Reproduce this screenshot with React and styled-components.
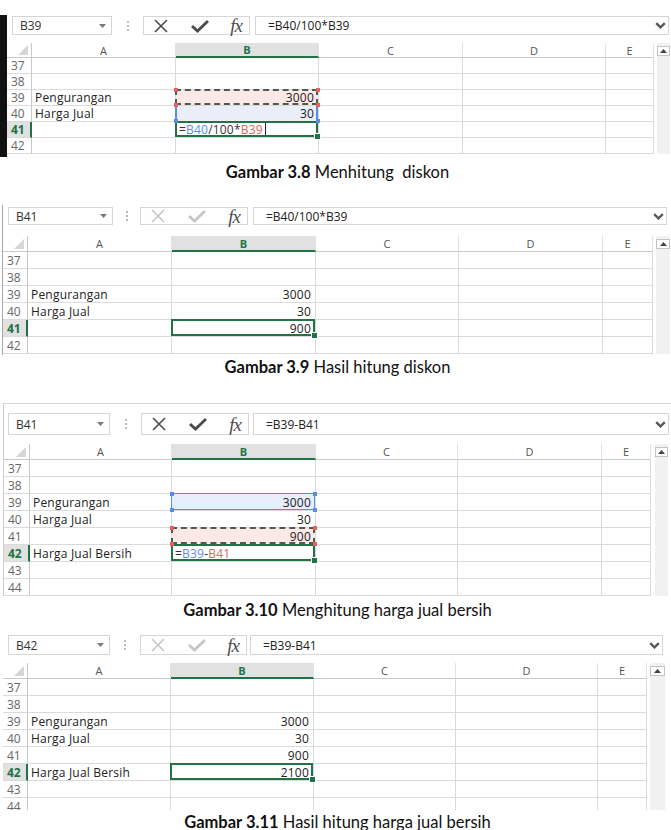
import React from 'react'
import styled, { createGlobalStyle, css } from 'styled-components'

const GREEN = '#217346'
const BLUE = '#5b8de6'
const RED = '#e2625e'
const GRID = '#dadada'
const HEAD = '#c9c9c9'

const GlobalStyle = createGlobalStyle`
  html, body { margin: 0; padding: 0; background: #fff; overflow: hidden; }
  body { font-family: "Open Sans", "Noto Sans", sans-serif; color: #222; }
`

const Page = styled.div`
  width: 671px;
  display: flex;
  flex-direction: column;
`

const Shot = styled.div`
  display: flex;
  flex-direction: column;
  flex-shrink: 0;
  margin: ${p => p.$mt}px 0 0 ${p => p.$ml || 0}px;
  padding: ${p => p.$pt || 0}px 0 ${p => p.$pb || 0}px;
  border-left: ${p => p.$edge || 'none'};
  border-top: ${p => p.$top || 'none'};
  height: ${p => (p.$h ? p.$h + 'px' : 'auto')};
  overflow: hidden;
`

/* ---- formula bar ---- */

const Toolbar = styled.div`
  display: flex;
  align-items: stretch;
  flex-shrink: 0;
  height: ${p => p.$h}px;
  margin: 0 ${p => p.$mr}px ${p => p.$mb}px ${p => p.$ml}px;
`

const NameBox = styled.div`
  width: ${p => p.$w}px;
  box-sizing: border-box;
  border: 1px solid #d6d6d6;
  display: flex;
  align-items: center;
  justify-content: space-between;
  padding: 0 5px 0 7px;
  font-size: 12px;
  color: #333;
`

const Dots = styled.div`
  width: ${p => p.$w}px;
  display: flex;
  flex-direction: column;
  align-items: center;
  justify-content: center;
  gap: 2px;
`

const Dot = styled.span`
  width: 2px;
  height: 2px;
  background: #bdbdbd;
`

const Buttons = styled.div`
  width: ${p => p.$w}px;
  margin-right: ${p => p.$gap}px;
  box-sizing: border-box;
  border: 1px solid #d6d6d6;
  display: flex;
  align-items: center;
  justify-content: space-between;
  padding: 0 7px 0 9px;
  color: ${p => (p.$live ? '#4a4a4a' : '#c6c6c6')};
`

const Fx = styled.span`
  font-family: "Liberation Serif", "DejaVu Serif", serif;
  font-style: italic;
  font-size: 19px;
  line-height: 1;
  color: #4d4d4d;
  letter-spacing: -1px;
`

const FormulaBox = styled.div`
  flex: 1;
  border: 1px solid #d6d6d6;
  display: flex;
  align-items: center;
  justify-content: space-between;
  padding: 0 2px 0 12px;
  font-size: 12px;
  color: #222;
`

/* ---- sheet ---- */

const SheetArea = styled.div`
  display: flex;
  align-items: stretch;
`

const Grid = styled.div`
  display: grid;
  grid-template-columns: ${p => p.$cols.map(c => c + 'px').join(' ')};
  grid-template-rows: ${p => p.$hh}px;
  grid-auto-rows: ${p => p.$rh}px;
`

const Scrollbar = styled.div`
  width: ${p => p.$w}px;
  margin-left: ${p => p.$gap}px;
  background: #f1f1f1;
  padding-top: 3px;
`

const ScrollUp = styled.div`
  height: 10px;
  box-sizing: border-box;
  background: #fff;
  border: 1px solid #c4c4c4;
  display: flex;
  align-items: center;
  justify-content: center;
`

const ColHead = styled.div`
  display: flex;
  align-items: center;
  justify-content: center;
  font-size: 11px;
  color: #555;
  border-right: 1px solid #e2e2e2;
  border-bottom: 1px solid ${HEAD};
  ${p => p.$sel && css`
    background: #e1e1e1;
    color: ${GREEN};
    font-weight: 700;
    border-bottom: 2px solid ${GREEN};
  `}
`

const CornerHead = styled(ColHead)`
  justify-content: flex-end;
  align-items: flex-end;
  padding: 0 3px 2px 0;
  border-right: 1px solid ${HEAD};
`

const RowHead = styled.div`
  display: flex;
  align-items: center;
  padding-left: 4px;
  font-size: 12px;
  color: #666;
  border-right: 1px solid ${HEAD};
  border-bottom: 1px solid ${GRID};
  ${p => p.$sel && css`
    background: #e1e1e1;
    color: ${GREEN};
    font-weight: 700;
    border-right: 2px solid ${GREEN};
  `}
`

const Cell = styled.div`
  position: relative;
  display: flex;
  align-items: center;
  justify-content: ${p => (p.$right ? 'flex-end' : 'flex-start')};
  padding: 0 4px 0 3px;
  border-right: 1px solid ${GRID};
  border-bottom: 1px solid ${GRID};
  background: ${p => p.$bg || '#fff'};
  font-size: 12px;
  letter-spacing: 0.2px;
  white-space: nowrap;
  color: #222;
`

const Frame = styled.span`
  position: absolute;
  top: -1px;
  left: -1px;
  right: 0;
  bottom: 0;
  z-index: 2;
  pointer-events: none;
  ${p => p.$kind === 'active' && css`border: 2px solid ${GREEN};`}
  ${p => p.$kind === 'copy' && css`border: 2px dashed #4f5b4f;`}
  ${p => p.$kind === 'ref' && css`border: 1px solid ${BLUE};`}
  ${p => p.$kind === 'sides' && css`
    border-left: 2px solid ${BLUE};
    border-right: 2px solid ${BLUE};
  `}
`

const Handle = styled.span`
  position: absolute;
  z-index: 3;
  width: ${p => p.$s || 4}px;
  height: ${p => p.$s || 4}px;
  background: ${p => p.$c};
  ${p => (p.$at.includes('t') ? 'top' : 'bottom')}: -2px;
  ${p => (p.$at.includes('l') ? 'left' : 'right')}: -2px;
  ${p => p.$ring && css`outline: 1px solid #fff;`}
`

const Ref = styled.span`
  color: ${p => (p.$c === 'blue' ? BLUE : p.$c === 'red' ? RED : '#333')};
`

const Caret = styled.span`
  width: 1px;
  height: 13px;
  background: #222;
  margin-left: 2px;
`

const Caption = styled.div`
  margin-top: ${p => p.$mt}px;
  padding-left: 4px;
  text-align: center;
  font-family: Lato, "Liberation Sans", sans-serif;
  font-size: 16.5px;
  line-height: 18px;
  color: #111;
  white-space: pre;
  flex-shrink: 0;
`

/* ---- icons ---- */

const Cross = () => (
  <svg width="16" height="14" viewBox="0 0 16 14">
    <path d="M2 1 L14 13 M14 1 L2 13" stroke="currentColor" strokeWidth="1.6" fill="none" />
  </svg>
)

const Tick = () => (
  <svg width="20" height="14" viewBox="0 0 20 14">
    <path d="M2 7 L7.5 12 L18 2" stroke="currentColor" strokeWidth="2.8" fill="none" />
  </svg>
)

const DropTri = () => (
  <svg width="7" height="4" viewBox="0 0 7 4">
    <path d="M0 0 H7 L3.5 4 Z" fill="#7a7a7a" />
  </svg>
)

const Chevron = () => (
  <svg width="11" height="7" viewBox="0 0 11 7">
    <path d="M1.2 1.2 L5.5 5.4 L9.8 1.2" stroke="#5a5a5a" strokeWidth="2.4" fill="none" />
  </svg>
)

const UpTri = () => (
  <svg width="7" height="4" viewBox="0 0 7 4">
    <path d="M0 4 H7 L3.5 0 Z" fill="#444" />
  </svg>
)

const SelectAll = () => (
  <svg width="10" height="10" viewBox="0 0 10 10">
    <path d="M10 0 V10 H0 Z" fill="#d6d6d6" />
  </svg>
)

/* ---- data ---- */

const f1 = [['=', null], ['B40', 'blue'], ['/100*', null], ['B39', 'red']]
const f2 = [['=', null], ['B39', 'blue'], ['-', null], ['B41', 'red']]

const figures = [
  {
    shot: { mt: 15, edge: '7px solid #111', pt: 1, pb: 3 },
    bar: { h: 19, ml: 5, mr: 2, mb: 8, nameW: 100, dotsW: 31, btnW: 107, gap: 5, name: 'B39', live: true, formula: '=B40/100*B39' },
    cols: [25, 144, 143, 144, 143, 48], hh: 15, rh: 16, scroll: { gap: 3, w: 13 },
    active: 41,
    rows: [
      { n: 37 }, { n: 38 },
      { n: 39, a: 'Pengurangan', b: '3000', kind: 'copy' },
      { n: 40, a: 'Harga Jual', b: '30', kind: 'sides' },
      { n: 41, f: f1, kind: 'active', caret: true },
      { n: 42 },
    ],
    caption: { mt: 6, bold: 'Gambar 3.8', text: ' Menhitung  diskon' },
  },
  {
    shot: { mt: 24, ml: 2, edge: '1px solid #a8a8a8', pt: 2, pb: 1 },
    bar: { h: 18, ml: 5, mr: 4, mb: 11, nameW: 105, dotsW: 27, btnW: 108, gap: 5, name: 'B41', live: false, formula: '=B40/100*B39' },
    cols: [25, 144, 144, 143, 144, 50], hh: 16, rh: 17, scroll: { gap: 3, w: 14 },
    active: 41,
    rows: [
      { n: 37 }, { n: 38 },
      { n: 39, a: 'Pengurangan', b: '3000' },
      { n: 40, a: 'Harga Jual', b: '30' },
      { n: 41, b: '900', kind: 'active' },
      { n: 42 },
    ],
    caption: { mt: 3, bold: 'Gambar 3.9', text: ' Hasil hitung diskon' },
  },
  {
    shot: { mt: 27, ml: 3, edge: '1px solid #cfcfcf', top: '1px solid #d6d6d6', pt: 9 },
    bar: { h: 22, ml: 4, mr: 2, mb: 9, nameW: 102, dotsW: 31, btnW: 108, gap: 4, name: 'B41', live: true, formula: '=B39-B41' },
    cols: [26, 142, 144, 142, 144, 49], hh: 16, rh: 17, scroll: { gap: 4, w: 13 },
    active: 42,
    rows: [
      { n: 37 }, { n: 38 },
      { n: 39, a: 'Pengurangan', b: '3000', kind: 'ref' },
      { n: 40, a: 'Harga Jual', b: '30' },
      { n: 41, b: '900', kind: 'copy' },
      { n: 42, a: 'Harga Jual Bersih', f: f2, kind: 'active' },
      { n: 43 }, { n: 44 },
    ],
    caption: { mt: 5, bold: 'Gambar 3.10', text: ' Menghitung harga jual bersih' },
  },
  {
    shot: { mt: 16, ml: 3, h: 175 },
    bar: { h: 20, ml: 5, mr: 8, mb: 8, nameW: 102, dotsW: 30, btnW: 107, gap: 3, name: 'B42', live: false, formula: '=B39-B41' },
    cols: [25, 143, 143, 142, 142, 49], hh: 16, rh: 17, scroll: { gap: 3, w: 15 },
    active: 42,
    rows: [
      { n: 37 }, { n: 38 },
      { n: 39, a: 'Pengurangan', b: '3000' },
      { n: 40, a: 'Harga Jual', b: '30' },
      { n: 41, b: '900' },
      { n: 42, a: 'Harga Jual Bersih', b: '2100', kind: 'active' },
      { n: 43 }, { n: 44 },
    ],
    caption: { mt: 3, bold: 'Gambar 3.11', text: ' Hasil hitung harga jual bersih' },
  },
]

const cellBg = { copy: '#fce8e6', ref: '#e7edfb', sides: '#e9eef9' }

function Selection({ kind }) {
  if (!kind) return null
  if (kind === 'active') {
    return (
      <>
        <Frame $kind="active" />
        <Handle $at="br" $c={GREEN} $s={5} $ring />
      </>
    )
  }
  const c = kind === 'copy' ? RED : BLUE
  const corners = kind === 'sides' ? ['bl', 'br'] : ['tl', 'tr', 'bl', 'br']
  return (
    <>
      <Frame $kind={kind} />
      {corners.map(at => <Handle key={at} $at={at} $c={c} />)}
    </>
  )
}

function FormulaBar({ bar }) {
  return (
    <Toolbar $h={bar.h} $ml={bar.ml} $mr={bar.mr} $mb={bar.mb}>
      <NameBox $w={bar.nameW}>
        <span>{bar.name}</span>
        <DropTri />
      </NameBox>
      <Dots $w={bar.dotsW}>
        <Dot /><Dot /><Dot />
      </Dots>
      <Buttons $w={bar.btnW} $gap={bar.gap} $live={bar.live}>
        <Cross />
        <Tick />
        <Fx>fx</Fx>
      </Buttons>
      <FormulaBox>
        <span>{bar.formula}</span>
        <Chevron />
      </FormulaBox>
    </Toolbar>
  )
}

function Sheet({ fig }) {
  return (
    <SheetArea>
      <Grid $cols={fig.cols} $hh={fig.hh} $rh={fig.rh}>
        <CornerHead><SelectAll /></CornerHead>
        {['A', 'B', 'C', 'D', 'E'].map(l => (
          <ColHead key={l} $sel={l === 'B'}>{l}</ColHead>
        ))}
        {fig.rows.map(r => (
          <React.Fragment key={r.n}>
            <RowHead $sel={r.n === fig.active}>{r.n}</RowHead>
            <Cell>{r.a}</Cell>
            <Cell $right={!r.f} $bg={cellBg[r.kind]}>
              {r.f ? r.f.map(([t, c], i) => <Ref key={i} $c={c}>{t}</Ref>) : r.b}
              {r.caret && <Caret />}
              <Selection kind={r.kind} />
            </Cell>
            <Cell />
            <Cell />
            <Cell />
          </React.Fragment>
        ))}
      </Grid>
      <Scrollbar $w={fig.scroll.w} $gap={fig.scroll.gap}>
        <ScrollUp><UpTri /></ScrollUp>
      </Scrollbar>
    </SheetArea>
  )
}

export default function App() {
  return (
    <Page>
      <GlobalStyle />
      {figures.map((fig, i) => (
        <React.Fragment key={i}>
          <Shot $mt={fig.shot.mt} $ml={fig.shot.ml} $edge={fig.shot.edge} $top={fig.shot.top}
                $pt={fig.shot.pt} $pb={fig.shot.pb} $h={fig.shot.h}>
            <FormulaBar bar={fig.bar} />
            <Sheet fig={fig} />
          </Shot>
          <Caption $mt={fig.caption.mt}>
            <b>{fig.caption.bold}</b>{fig.caption.text}
          </Caption>
        </React.Fragment>
      ))}
    </Page>
  )
}
